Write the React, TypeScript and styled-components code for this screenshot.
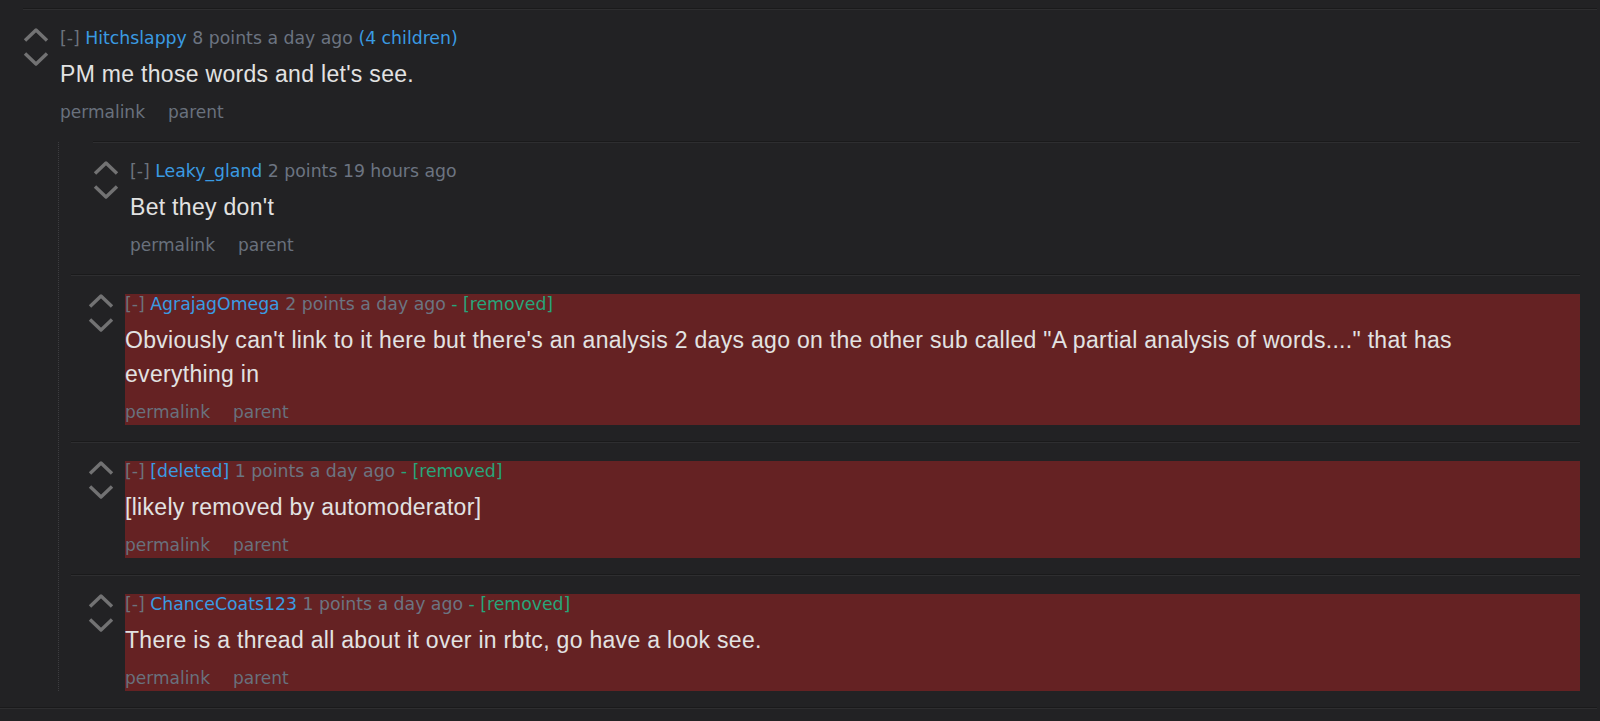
import React from "react";
import styled, { createGlobalStyle } from "styled-components";

const GlobalStyle = createGlobalStyle`
  html, body {
    margin: 0;
    padding: 0;
    background: #222224;
  }
  #root {
    min-height: 721px;
    background: #222224;
  }
`;

const Page = styled.div`
  padding-top: 9px;
  background: #222224;
`;

const Comment = styled.div<{ $indent: number; $pad: number }>`
  margin-left: ${(p) => p.$indent}px;
  padding-left: ${(p) => p.$pad}px;
  padding-top: 18px;
  padding-bottom: 17px;
  border-top: 1px solid #2e2e30;
  box-shadow: 0 -1px 0 #1a1a1b;
`;

const TopComment = styled(Comment)`
  margin-right: 3px;
`;

const Row = styled.div`
  display: flex;
  align-items: flex-start;
`;

const VoteCol = styled.div`
  width: 37px;
  flex: 0 0 37px;
  display: flex;
  flex-direction: column;
  gap: 8px;
`;

const Entry = styled.div<{ $removed?: boolean }>`
  flex: 1;
  min-width: 0;
  padding-bottom: 3px;
  background: ${(p) => (p.$removed ? "#652223" : "transparent")};
`;

const Meta = styled.div`
  font-family: "DejaVu Sans", Verdana, sans-serif;
  font-size: 17.3px;
  line-height: 20px;
  color: #6c7481;
  white-space: nowrap;
`;

const Toggle = styled.span`
  color: #6d737c;
`;

const Author = styled.span`
  color: #3a9be2;
`;

const Kids = styled.span`
  color: #3a9be2;
`;

const Removed = styled.span`
  color: #27a57a;
`;

const Body = styled.div`
  margin-top: 9px;
  max-width: 1360px;
  font-family: "Liberation Sans", Arial, Helvetica, sans-serif;
  font-size: 23px;
  line-height: 34px;
  letter-spacing: 0.3px;
  color: #e2e2e2;
`;

const Links = styled.div`
  margin-top: 11px;
  display: flex;
  gap: 23px;
  font-family: "DejaVu Sans", Verdana, sans-serif;
  font-size: 17px;
  line-height: 20px;
  color: #69717d;
`;

const Children = styled.div`
  margin-left: 35px;
  margin-right: 17px;
  margin-top: 17px;
  border-left: 1px dotted #3d3d40;
  & > div:last-child {
    padding-bottom: 0;
  }
`;

const Footer = styled.div`
  margin-right: 3px;
  border-top: 1px solid #2e2e30;
  box-shadow: 0 -1px 0 #1a1a1b;
  height: 11px;
`;

const Chevron = ({ down }: { down?: boolean }) => (
  <svg width="26" height="15" viewBox="0 0 26 15" style={{ display: "block" }}>
    <polyline
      points={down ? "2,2.5 13,13 24,2.5" : "2,12.5 13,2 24,12.5"}
      fill="none"
      stroke="#727273"
      strokeWidth="3.4"
      strokeLinejoin="round"
    />
  </svg>
);

const Votes = () => (
  <VoteCol>
    <Chevron />
    <Chevron down />
  </VoteCol>
);

type EntryProps = {
  author: string;
  meta: string;
  kids?: string;
  removed?: boolean;
  body: string;
};

const CommentEntry = ({ author, meta, kids, removed, body }: EntryProps) => (
  <Row>
    <Votes />
    <Entry $removed={removed}>
      <Meta>
        <Toggle>[-]</Toggle> <Author>{author}</Author> {meta}
        {kids && (
          <>
            {" "}
            <Kids>{kids}</Kids>
          </>
        )}
        {removed && (
          <>
            {" "}
            <Removed>- [removed]</Removed>
          </>
        )}
      </Meta>
      <Body>{body}</Body>
      <Links>
        <span>permalink</span>
        <span>parent</span>
      </Links>
    </Entry>
  </Row>
);

const removedComments = [
  {
    author: "AgrajagOmega",
    meta: "2 points a day ago",
    body:
      "Obviously can't link to it here but there's an analysis 2 days ago on the other sub called \"A partial analysis of words....\" that has everything in",
  },
  {
    author: "[deleted]",
    meta: "1 points a day ago",
    body: "[likely removed by automoderator]",
  },
  {
    author: "ChanceCoats123",
    meta: "1 points a day ago",
    body: "There is a thread all about it over in rbtc, go have a look see.",
  },
];

export default function App() {
  return (
    <>
      <GlobalStyle />
      <Page>
        <TopComment $indent={23} $pad={0}>
          <CommentEntry
            author="Hitchslappy"
            meta="8 points a day ago"
            kids="(4 children)"
            body="PM me those words and let's see."
          />
          <Children>
            <Comment $indent={34} $pad={0}>
              <CommentEntry
                author="Leaky_gland"
                meta="2 points 19 hours ago"
                body="Bet they don't"
              />
            </Comment>
            {removedComments.map((c) => (
              <Comment key={c.author} $indent={12} $pad={17}>
                <CommentEntry
                  author={c.author}
                  meta={c.meta}
                  removed
                  body={c.body}
                />
              </Comment>
            ))}
          </Children>
        </TopComment>
        <Footer />
      </Page>
    </>
  );
}
